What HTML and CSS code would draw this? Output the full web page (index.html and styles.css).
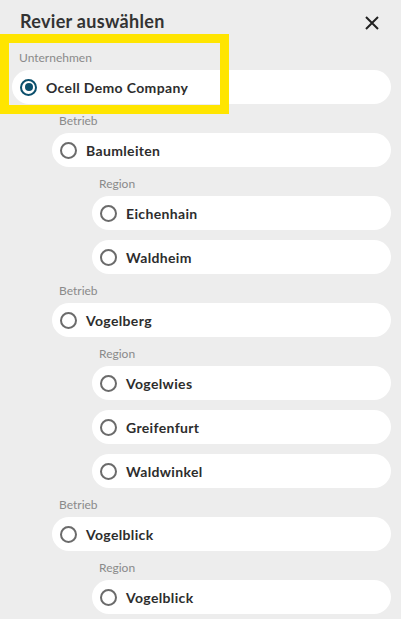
FILE: index.html
```html
<!DOCTYPE html>
<html lang="de">
  <head>
    <meta charset="UTF-8" />
    <meta name="viewport" content="width=device-width, initial-scale=1.0" />
    <title>Revier auswählen</title>
    <link rel="stylesheet" href="styles.css">
  </head>
  <body>
    <div class="panel">
      <div class="header">
        <h1 class="title">Revier auswählen</h1>
        <button class="close-btn" type="button" aria-label="Schließen">
          <svg width="14" height="14" viewBox="0 0 14 14">
            <path d="M1 1 L13 13 M13 1 L1 13" stroke="#222" stroke-width="2" fill="none" />
          </svg>
        </button>
      </div>

      <div class="tree">
        <div class="group">
          <div class="group-label">Unternehmen</div>
          <div class="group-items">
            <div class="item">
              <label class="row">
                <span class="radio checked"></span>
                <span class="row-text">Ocell Demo Company</span>
              </label>
              <div class="children">
                <!-- Betrieb 1 -->
                <div class="group">
                  <div class="group-label">Betrieb</div>
                  <div class="group-items">
                    <div class="item">
                      <label class="row"><span class="radio"></span><span class="row-text">Baumleiten</span></label>
                      <div class="children">
                        <div class="group">
                          <div class="group-label">Region</div>
                          <div class="group-items">
                            <label class="row"><span class="radio"></span><span class="row-text">Eichenhain</span></label>
                            <label class="row"><span class="radio"></span><span class="row-text">Waldheim</span></label>
                          </div>
                        </div>
                      </div>
                    </div>
                  </div>
                </div>
                <!-- Betrieb 2 -->
                <div class="group">
                  <div class="group-label">Betrieb</div>
                  <div class="group-items">
                    <div class="item">
                      <label class="row"><span class="radio"></span><span class="row-text">Vogelberg</span></label>
                      <div class="children">
                        <div class="group">
                          <div class="group-label">Region</div>
                          <div class="group-items">
                            <label class="row"><span class="radio"></span><span class="row-text">Vogelwies</span></label>
                            <label class="row"><span class="radio"></span><span class="row-text">Greifenfurt</span></label>
                            <label class="row"><span class="radio"></span><span class="row-text">Waldwinkel</span></label>
                          </div>
                        </div>
                      </div>
                    </div>
                  </div>
                </div>
                <!-- Betrieb 3 -->
                <div class="group">
                  <div class="group-label">Betrieb</div>
                  <div class="group-items">
                    <div class="item">
                      <label class="row"><span class="radio"></span><span class="row-text">Vogelblick</span></label>
                      <div class="children">
                        <div class="group">
                          <div class="group-label">Region</div>
                          <div class="group-items">
                            <label class="row"><span class="radio"></span><span class="row-text">Vogelblick</span></label>
                          </div>
                        </div>
                      </div>
                    </div>
                  </div>
                </div>
              </div>
            </div>
          </div>
        </div>
      </div>

      <!-- tutorial highlight -->
      <div class="highlight"></div>
    </div>
  </body>
</html>
```

FILE: styles.css
```css
body {
  margin: 0;
  background-color: #ededed;
  font-family: Lato, "Open Sans", sans-serif;
  color: #2d2d2d;
}
.panel {
  position: relative;
  height: 619px;
  overflow: hidden;
}
.header {
  display: flex;
  align-items: center;
  justify-content: space-between;
  height: 42px;
  padding: 0 22px 0 20px;
}
.title {
  margin: 0;
  font-size: 18px;
  font-weight: 700;
  letter-spacing: 0.3px;
  color: #333;
}
.close-btn {
  border: none;
  background: none;
  padding: 0;
  width: 14px;
  height: 14px;
  margin-top: 4px;
  cursor: pointer;
}
.close-btn svg {
  display: block;
}
.tree {
  padding: 8px 10px 0 12px;
}
.group {
  display: flex;
  flex-direction: column;
}
.group-label {
  font-size: 12px;
  line-height: 16px;
  color: #8a8a8a;
  padding-left: 7px;
  margin-bottom: 4px;
}
.group-items {
  display: flex;
  flex-direction: column;
  gap: 10px;
}
.item {
  display: flex;
  flex-direction: column;
}
.children {
  display: flex;
  flex-direction: column;
  gap: 9px;
  margin-top: 9px;
  padding-left: 40px;
}
.row {
  display: flex;
  align-items: center;
  gap: 9px;
  height: 34px;
  padding-left: 8px;
  background-color: #fff;
  border-radius: 17px;
  cursor: pointer;
}
.row-text {
  font-size: 14px;
  font-weight: 700;
  letter-spacing: 0.35px;
  color: #2d2d2d;
}
.radio {
  box-sizing: border-box;
  width: 17px;
  height: 17px;
  border: 2px solid #6b6b6b;
  border-radius: 50%;
  display: flex;
  align-items: center;
  justify-content: center;
}
.radio.checked {
  border-color: #0b4f6c;
}
.radio.checked::after {
  content: "";
  width: 8px;
  height: 8px;
  border-radius: 50%;
  background-color: #0b4f6c;
}
.highlight {
  position: absolute;
  left: 0;
  top: 34px;
  width: 211px;
  height: 62px;
  border: 9px solid #ffe500;
  pointer-events: none;
}
```
